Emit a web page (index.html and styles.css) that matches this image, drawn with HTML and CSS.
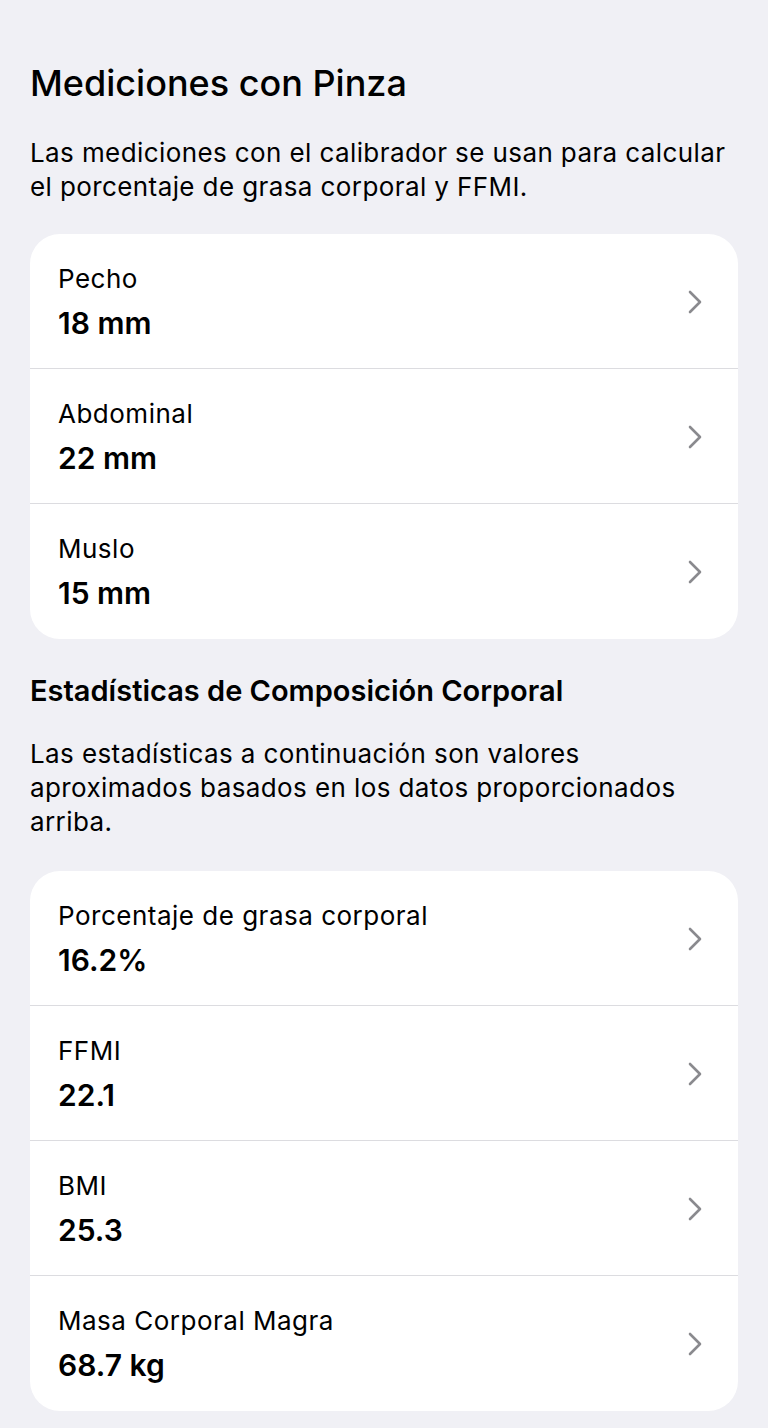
FILE: index.html
```html
<!DOCTYPE html>
<html lang="es">
<head>
    <meta charset="UTF-8">
    <meta name="viewport" content="width=device-width, initial-scale=1.0">
    <title>Mediciones con Pinza</title>
    <link rel="stylesheet" href="styles.css">
</head>
<body>
    <h1 class="page-title">Mediciones con Pinza</h1>
    <p class="note">Las mediciones con el calibrador se usan para calcular el porcentaje de grasa corporal y FFMI.</p>

    <div class="card">
        <div class="row">
            <div class="row-text">
                <div class="label">Pecho</div>
                <div class="value">18 mm</div>
            </div>
            <svg class="chevron" width="14" height="24" viewBox="0 0 14 24"><polyline points="2,2 12,12 2,22"/></svg>
        </div>
        <div class="row">
            <div class="row-text">
                <div class="label">Abdominal</div>
                <div class="value">22 mm</div>
            </div>
            <svg class="chevron" width="14" height="24" viewBox="0 0 14 24"><polyline points="2,2 12,12 2,22"/></svg>
        </div>
        <div class="row">
            <div class="row-text">
                <div class="label">Muslo</div>
                <div class="value">15 mm</div>
            </div>
            <svg class="chevron" width="14" height="24" viewBox="0 0 14 24"><polyline points="2,2 12,12 2,22"/></svg>
        </div>
    </div>

    <h2 class="section-title">Estadísticas de Composición Corporal</h2>
    <p class="note note-stats">Las estadísticas a continuación son valores aproximados basados en los datos proporcionados arriba.</p>

    <div class="card">
        <div class="row">
            <div class="row-text">
                <div class="label">Porcentaje de grasa corporal</div>
                <div class="value">16.2%</div>
            </div>
            <svg class="chevron" width="14" height="24" viewBox="0 0 14 24"><polyline points="2,2 12,12 2,22"/></svg>
        </div>
        <div class="row">
            <div class="row-text">
                <div class="label">FFMI</div>
                <div class="value">22.1</div>
            </div>
            <svg class="chevron" width="14" height="24" viewBox="0 0 14 24"><polyline points="2,2 12,12 2,22"/></svg>
        </div>
        <div class="row">
            <div class="row-text">
                <div class="label">BMI</div>
                <div class="value">25.3</div>
            </div>
            <svg class="chevron" width="14" height="24" viewBox="0 0 14 24"><polyline points="2,2 12,12 2,22"/></svg>
        </div>
        <div class="row">
            <div class="row-text">
                <div class="label">Masa Corporal Magra</div>
                <div class="value">68.7 kg</div>
            </div>
            <svg class="chevron" width="14" height="24" viewBox="0 0 14 24"><polyline points="2,2 12,12 2,22"/></svg>
        </div>
    </div>
</body>
</html>
```

FILE: styles.css
```css
:root {
    --bg-color: #f0f0f5;
    --card-color: #ffffff;
    --line-color: #dcdce0;
    --chevron-color: #8a8a8e;
    --text-color: #000;
}

body {
    margin: 0;
    padding: 0 30px;
    background: var(--bg-color);
    color: var(--text-color);
    font-family: 'Inter', 'Noto Sans', sans-serif;
}

.page-title {
    margin: 0;
    padding-top: 61px;
    font-size: 36px;
    line-height: 44px;
    font-weight: 500;
}

.note {
    margin: 31px 0 30px;
    font-size: 26px;
    line-height: 34px;
    font-weight: 400;
    letter-spacing: 0.4px;
}

.note-stats {
    margin: 28px 0 32px;
}

.section-title {
    margin: 34px 0 0;
    font-size: 29px;
    line-height: 36px;
    font-weight: 600;
}

.card {
    background: var(--card-color);
    border-radius: 30px;
    overflow: hidden;
}

.row {
    display: flex;
    align-items: center;
    justify-content: space-between;
    padding: 29px 36px 27px 28px;
    border-bottom: 1px solid var(--line-color);
}

.row:last-child {
    border-bottom: none;
    padding-bottom: 28px;
}

.label {
    font-size: 26px;
    line-height: 32px;
    letter-spacing: 0.5px;
}

.value {
    margin-top: 10px;
    font-size: 30px;
    line-height: 36px;
    font-weight: 600;
}

.chevron {
    flex-shrink: 0;
}

.chevron polyline {
    fill: none;
    stroke: var(--chevron-color);
    stroke-width: 2.6;
    stroke-linecap: round;
    stroke-linejoin: round;
}
```
